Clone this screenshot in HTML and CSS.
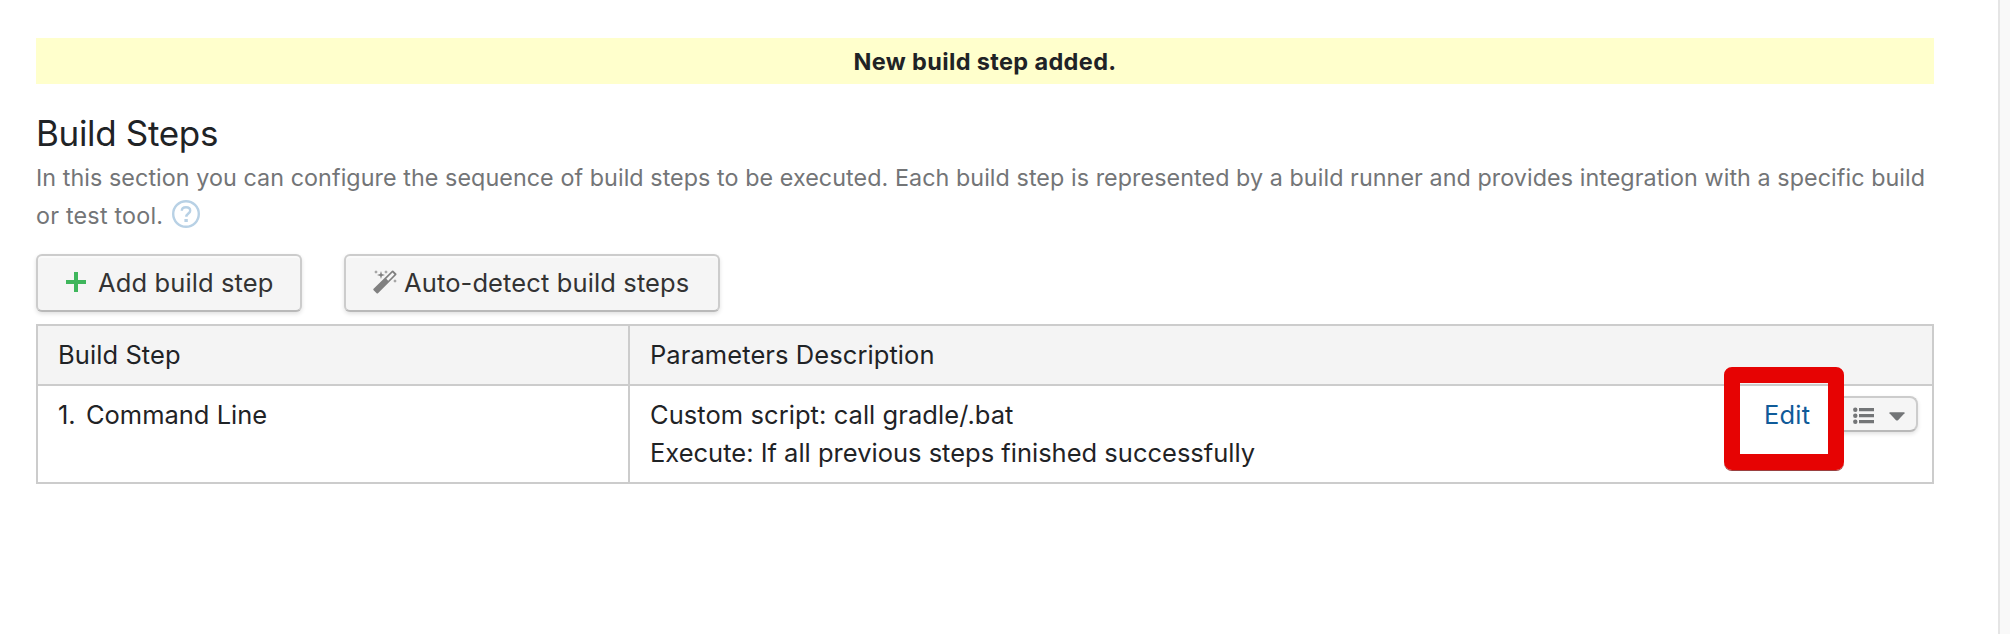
FILE: index.html
```html
<!DOCTYPE html>
<html lang="en">
<head>
<meta charset="utf-8">
<title>Build Steps</title>
<link rel="stylesheet" href="styles.css">
</head>
<body>
<div class="page">
  <main class="content">
    <div class="message"><span class="t-message">New build step added.</span></div>
    <h2 class="heading"><span class="t-heading">Build Steps</span></h2>
    <p class="note">
      <span class="t-note1">In this section you can configure the sequence of build steps to be executed. Each build step is represented by a build runner and provides integration with a specific build</span><br>
      <span class="t-note2">or test tool.</span>
      <svg class="help" viewBox="0 0 28 28"><circle cx="14" cy="14" r="12.8"/><path d="M9.800 10.800C9.800 8.600 11.500 7.300 14 7.300S18.200 8.700 18.200 10.700C18.200 13.500 14.300 13.600 14.300 16.800"/><rect x="12.400" y="19" width="3.400" height="3"/></svg>
    </p>
    <div class="actions">
      <button class="btn btn-add"><svg class="plus" viewBox="0 0 20 20"><path d="M8 0h4v8h8v4h-8v8H8v-8H0V8h8z"/></svg><span class="t-add">Add build step</span></button>
      <button class="btn btn-detect"><svg class="wand" viewBox="0 0 24 24"><path fill-rule="evenodd" d="M19 .8a1 1 0 0 1 1.400 0L23.200 3.600a1 1 0 0 1 0 1.400L5 23.200a1 1 0 0 1-1.400 0L.6 20.200a1 1 0 0 1 0-1.400zM19.500 2.600L13.300 8.800 15.200 10.700 21.400 4.500z"/><path d="M8 1l.9 3.100L12 5l-3.100.9L8 9l-.9-3.100L4 5l3.100-.9zM3 0l.5 1.500L5 2l-1.500.5L3 4l-.5-1.500L1 2l1.500-.5zM13 0l.5 1.500L15 2l-1.500.5L13 4l-.5-1.500L11 2l1.500-.5zM22 9l.5 1.500L24 11l-1.500.5L22 13l-.5-1.500L20 11l1.500-.5z"/></svg><span class="t-detect">Auto-detect build steps</span></button>
    </div>
    <div class="table">
      <div class="cell head"><span class="t-h1">Build Step</span></div>
      <div class="cell head"><span class="t-h2">Parameters Description</span></div>
      <div class="cell"><span class="t-name"><span class="number">1.</span> Command Line</span></div>
      <div class="cell params">
        <div class="description"><span class="t-p1">Custom script: call gradle/.bat</span><br><span class="t-p2">Execute: If all previous steps finished successfully</span></div>
        <a class="edit"><span class="t-edit">Edit</span></a>
        <button class="menu">
          <svg class="list" viewBox="0 0 22 18"><circle cx="2.300" cy="2.700" r="2.200"/><circle cx="2.300" cy="8.700" r="2.200"/><circle cx="2.300" cy="14.700" r="2.200"/><path d="M6 1h15v3.300H6zM6 7h15v3.300H6zM6 13h15v3.300H6z"/></svg>
          <svg class="caret" viewBox="0 0 16 9"><path d="M1 .3h14q1 .2.500 1L9 8.200q-1 .8-2 0L.5 1.300Q0 .5 1 .3z"/></svg>
        </button>
        <div class="highlight"></div>
      </div>
    </div>
  </main>
  <aside class="sidebar"></aside>
</div>
</body>
</html>
```
FILE: styles.css
```css
* { box-sizing: border-box; }
body { margin: 0; background: #fff; color: #1f2326; font-family: Inter, "Liberation Sans", sans-serif; font-size: 25.5px; line-height: 38px; }
.page { display: flex; height: 634px; overflow: hidden; }
.content { width: 1998px; padding: 38px 64px 0 36px; }
.sidebar { width: 12px; border-left: 2px solid #e5e5e5; background: #f9f9f9; }
.content span { white-space: nowrap; }
.message { height: 46px; background: #ffc; text-align: center; font-size: 23.5px; line-height: 48px; font-weight: 700; letter-spacing: .36px; }
.heading { margin: 26px 0 0; height: 46px; line-height: 46px; font-size: 35px; font-weight: 400; letter-spacing: -.33px; }
.note { margin: 3px 0 0; height: 76px; font-size: 23.3px; color: #737577; }
.t-note1 { letter-spacing: .068px; }
.t-note2 { letter-spacing: .22px; }
.help { width: 28px; height: 28px; margin-left: 2px; vertical-align: -4px; fill: none; stroke: #b8d1e5; stroke-width: 2.4; }
.help rect { fill: #b8d1e5; stroke: none; }
.actions { display: flex; gap: 42px; margin-top: 19px; }
.btn { display: flex; align-items: center; height: 58px; padding: 0 0 2px 28px; border: 2px solid #ccc; border-bottom-color: #b9b9b9; border-radius: 6px; background: #f5f5f5; box-shadow: 0 2px 4px rgba(0,0,0,.12), inset 0 2px 0 #fafafa; font: inherit; color: #333; letter-spacing: .12px; }
.btn span { padding-top: 2px; }
.btn-add { width: 266px; }
.btn-detect { width: 376px; padding-left: 27px; }
.plus { width: 20px; height: 20px; margin-right: 12px; fill: #3fb65c; }
.wand { width: 24px; height: 24px; margin-right: 8px; fill: #808080; }
.t-detect { margin-left: -1px; }
.table { display: grid; grid-template-columns: 592px 1304px; grid-template-rows: 60px 98px; width: 1898px; margin-top: 12px; border-left: 2px solid #ccc; border-top: 2px solid #ccc; }
.cell { padding: 10px 20px; border-right: 2px solid #ccc; border-bottom: 2px solid #ccc; }
.head { background: #f4f4f4; letter-spacing: .08px; }
.number { margin-right: 3px; }
.params { position: relative; display: flex; padding-right: 14px; }
.description { flex: 1; }
.t-p1 { letter-spacing: .06px; }
.edit { width: 45px; margin-right: 27px; color: #0f5b99; letter-spacing: .2px; }
.menu { display: flex; align-items: center; width: 82px; height: 36px; padding: 4px 0 0 15px; border: 2px solid #ccc; border-bottom-color: #b9b9b9; border-radius: 8px; background: #f5f5f5; box-shadow: 0 2px 4px rgba(0,0,0,.12); fill: #737577; }
.list { width: 22px; height: 18px; margin-right: 14px; }
.caret { width: 16px; height: 9px; }
.highlight { position: absolute; left: 1094px; top: -19px; width: 120px; height: 103px; border: 16px solid #e60303; border-radius: 8px; box-shadow: 0 1px 0 #9a4040; }
```
